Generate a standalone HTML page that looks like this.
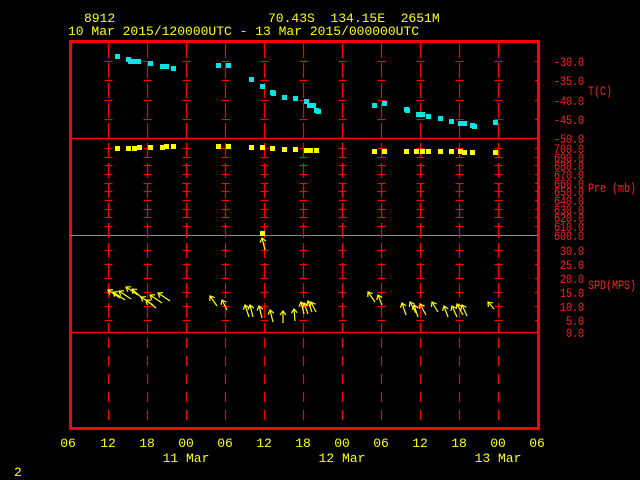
<!DOCTYPE html>
<html><head><style>
html,body{margin:0;padding:0;background:#000;width:640px;height:480px;overflow:hidden}
svg{display:block}
text{font-family:"Liberation Mono",monospace;font-size:13px;white-space:pre}
</style></head><body>
<svg width="640" height="480" viewBox="0 0 640 480" xmlns="http://www.w3.org/2000/svg">
<g fill="#ffff00">
<text x="84" y="22">8912</text>
<text x="268" y="22" xml:space="preserve">70.43S  134.15E  2651M</text>
<text x="68" y="35">10 Mar 2015/120000UTC - 13 Mar 2015/000000UTC</text>
</g>
<g stroke="#ff0000" fill="none">
<rect x="70.5" y="41.5" width="468" height="387" stroke-width="3"/>
<line x1="70" y1="138.5" x2="538" y2="138.5" stroke-width="1.5"/>
<line x1="70" y1="332.5" x2="538" y2="332.5" stroke-width="1.5"/>
</g>
<line x1="70" y1="235.5" x2="538" y2="235.5" stroke="#888" stroke-width="1"/>
<g id="grid" stroke="#ff0000" stroke-width="1.2"></g>
<g fill="#ff2020" text-anchor="end" transform="translate(584 0) scale(0.77 1)">
<text x="0" y="66">-30.0</text><text x="0" y="85">-35.0</text><text x="0" y="105">-40.0</text><text x="0" y="124">-45.0</text><text x="0" y="143">-50.0</text>
<text x="0" y="153">700.0</text><text x="0" y="162">690.0</text><text x="0" y="170">680.0</text><text x="0" y="179">670.0</text><text x="0" y="188">660.0</text><text x="0" y="196">650.0</text><text x="0" y="205">640.0</text><text x="0" y="214">630.0</text><text x="0" y="222">620.0</text><text x="0" y="231">610.0</text><text x="0" y="240">600.0</text>
<text x="0" y="255">30.0</text><text x="0" y="269">25.0</text><text x="0" y="283">20.0</text><text x="0" y="297">15.0</text><text x="0" y="311">10.0</text><text x="0" y="325">5.0</text><text x="0" y="337">0.0</text>
</g>
<g fill="#ff2020" transform="translate(588 0) scale(0.77 1)">
<text x="0" y="95">T(C)</text>
<text x="0" y="192" xml:space="preserve">Pre (mb)</text>
<text x="0" y="289">SPD(MPS)</text>
</g>
<g fill="#00e5e5" id="cy"></g>
<g fill="#ffff00" id="ye"></g>
<g stroke="#ffff00" stroke-width="1.2" fill="none" id="wind"></g>
<g fill="#ffff00" text-anchor="middle">
<text x="68" y="447">06</text><text x="108" y="447">12</text><text x="147" y="447">18</text><text x="186" y="447">00</text><text x="225" y="447">06</text><text x="264" y="447">12</text><text x="303" y="447">18</text><text x="342" y="447">00</text><text x="381" y="447">06</text><text x="420" y="447">12</text><text x="459" y="447">18</text><text x="498" y="447">00</text><text x="537" y="447">06</text>
<text x="186" y="462">11 Mar</text><text x="342" y="462">12 Mar</text><text x="498" y="462">13 Mar</text>
</g>
<text x="14" y="476" fill="#ffff00">2</text>
<script>
var ns="http://www.w3.org/2000/svg";
function el(p,t,a){var e=document.createElementNS(ns,t);for(var k in a)e.setAttribute(k,a[k]);p.appendChild(e);return e;}
var g=document.getElementById("grid");
var ticks=[61,80,100,119,148,157,165,174,183,191,200,209,217,226,250,264,278,292,306,320];
for(var k=1;k<=11;k++){var x=69.5+39*k;
 el(g,"line",{x1:x,y1:43,x2:x,y2:332,"stroke-dasharray":"15,5"});
 el(g,"line",{x1:x,y1:338,x2:x,y2:426,"stroke-dasharray":"10,8"});
 ticks.forEach(function(y){el(g,"line",{x1:x-4,y1:y+.5,x2:x+4,y2:y+.5});});
}
ticks.forEach(function(y){el(g,"line",{x1:535,y1:y+.5,x2:538,y2:y+.5});});
var cy=[[117,56],[128,59],[130,61],[134,61],[138,61],[150,63],[162,66],[166,66],[173,68],[218,65],[228,65],[251,79],[262,86],[272,92],[273,93],[284,97],[295,98],[306,101],[309,105],[313,105],[316,110],[318,111],[374,105],[384,103],[406,109],[407,110],[418,114],[422,114],[428,116],[440,118],[451,121],[460,123],[464,123],[472,125],[474,126],[495,122]];
var c=document.getElementById("cy");cy.forEach(function(p){el(c,"rect",{x:p[0]-2,y:p[1]-2,width:5,height:5});});
var ye=[[117,148],[128,148],[134,148],[139,147],[150,147],[162,147],[166,146],[173,146],[218,146],[228,146],[251,147],[262,147],[272,148],[284,149],[295,149],[306,150],[310,150],[316,150],[374,151],[384,151],[406,151],[416,151],[422,151],[428,151],[440,151],[451,151],[460,151],[464,152],[472,152],[495,152],[262,233]];
var y2=document.getElementById("ye");ye.forEach(function(p){el(y2,"rect",{x:p[0]-2,y:p[1]-2,width:5,height:5});});
var w=document.getElementById("wind");
var ar=[[108,290,12,8],[113,292,12,8],[119,291,12,8],[126,287,12,8],[132,289,10,9],[141,297,12,8],[146,300,10,8],[150,295,12,8],[158,293,12,8],[210,296,7,10],[222,300,5,10],[245,305,4,12],[250,305,3,12],[259,306,3,12],[270,310,3,12],[283,311,0,12],[294,309,1,12],[301,302,3,12],[304,303,4,11],[308,301,4,11],[311,302,5,10],[262,238,3,12],[368,292,7,10],[378,295,4,10],[402,303,4,12],[410,302,6,11],[414,305,4,12],[420,304,6,11],[432,302,6,10],[444,306,4,11],[452,306,5,11],[457,304,6,11],[462,305,5,11],[488,302,6,7]];
ar.forEach(function(a){var x=a[0],y=a[1],dx=a[2],dy=a[3];
 el(w,"line",{x1:x,y1:y,x2:x+dx,y2:y+dy});
 var L=Math.hypot(dx,dy),ux=dx/L,uy=dy/L;
 el(w,"polyline",{points:(x+ux*4-uy*3)+","+(y+uy*4+ux*3)+" "+x+","+y+" "+(x+ux*4+uy*3)+","+(y+uy*4-ux*3)});
});
</script>
</svg>
</body></html>
